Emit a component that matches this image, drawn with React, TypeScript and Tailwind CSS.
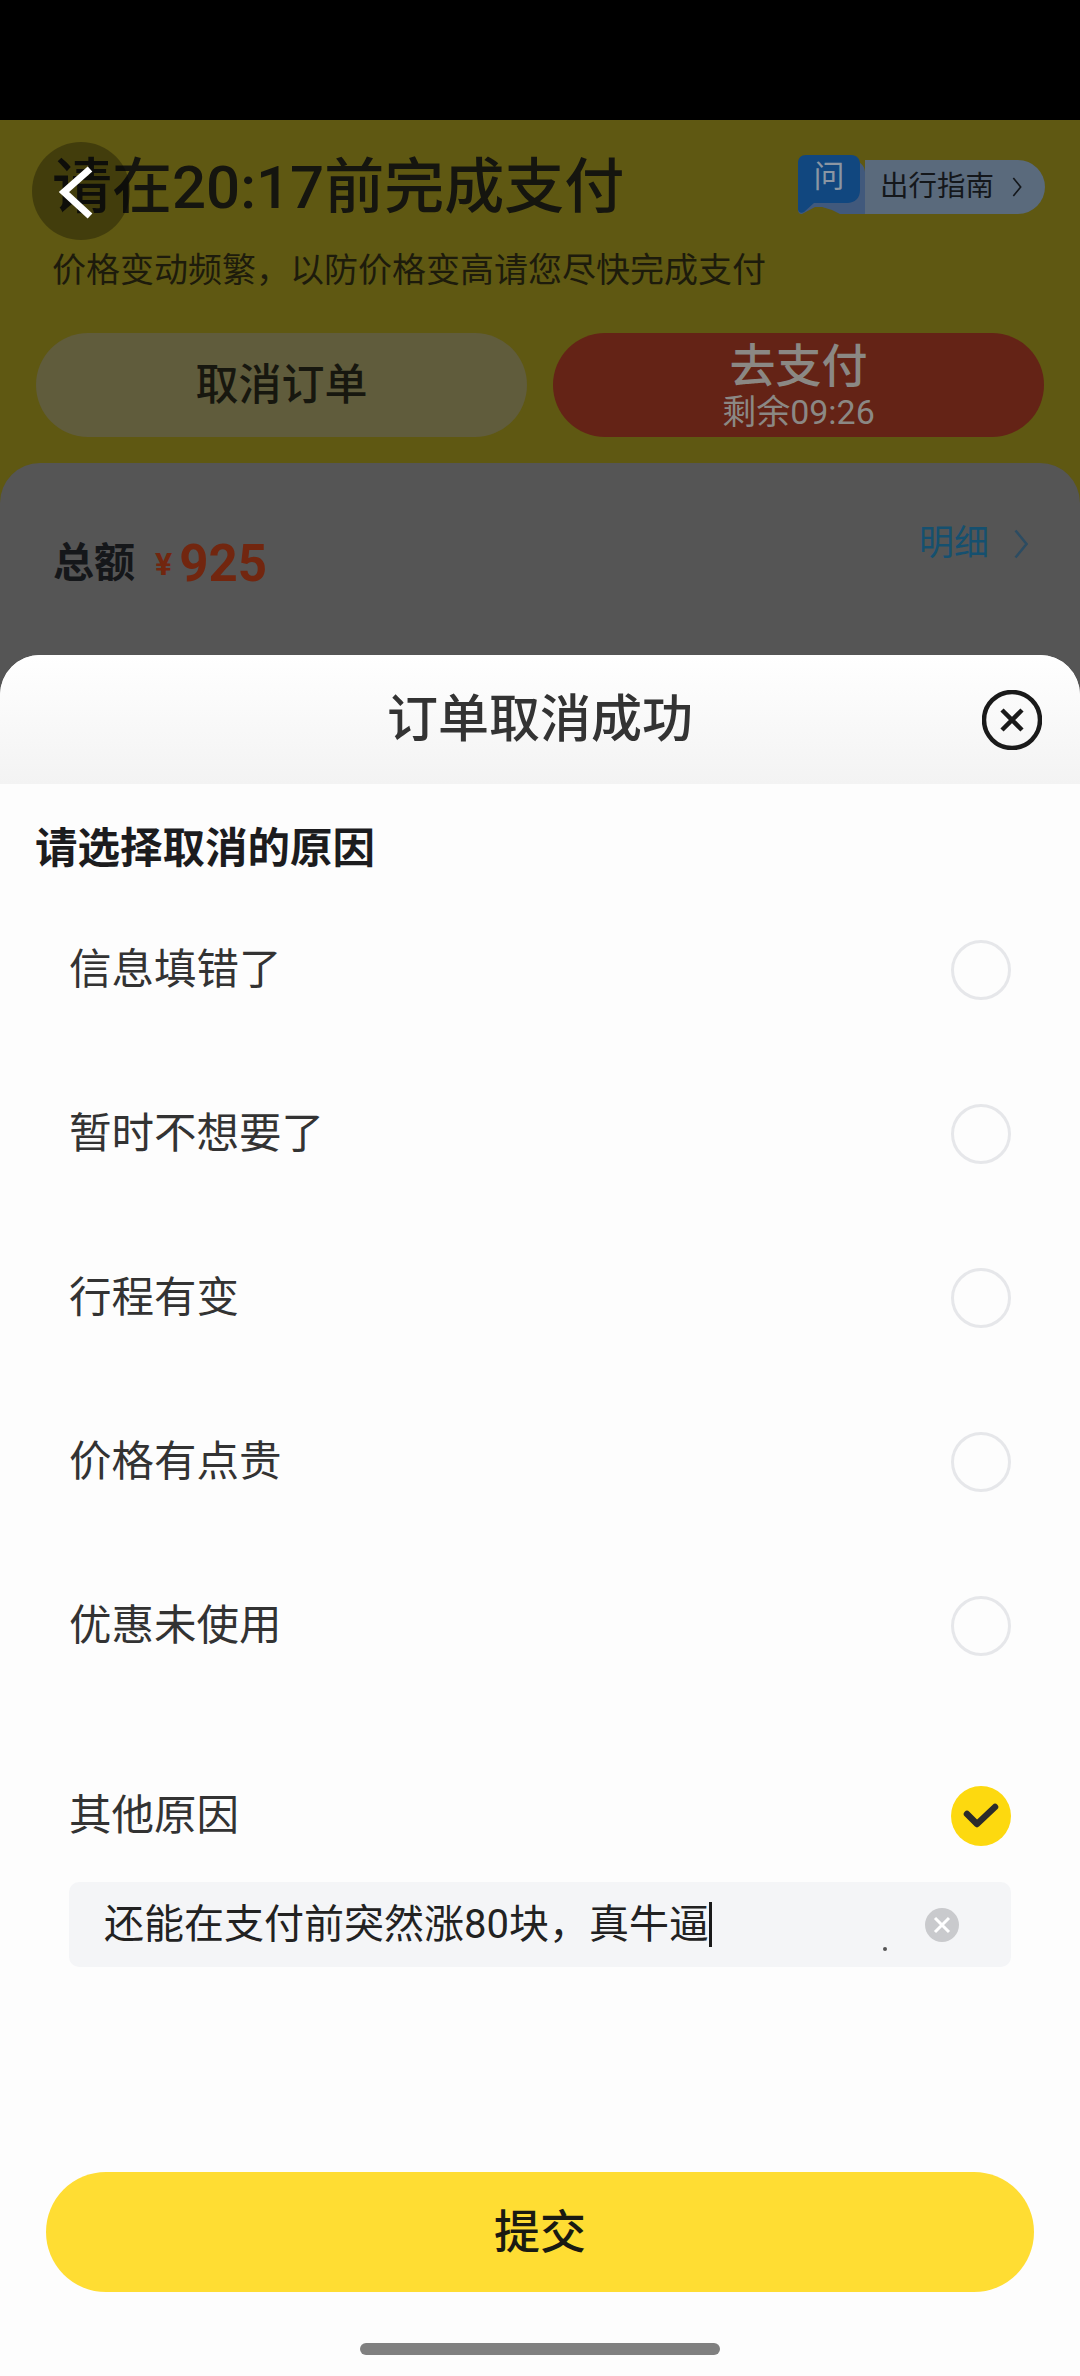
import React from 'react';

const FONT = "font-['Roboto','Noto_Sans_CJK_SC',sans-serif]";

const REASONS = ['信息填错了', '暂时不想要了', '行程有变', '价格有点贵', '优惠未使用'];

const Chevron: React.FC<{ className: string }> = ({ className }) => (
  <svg viewBox="0 0 14 30" fill="none" className={className}>
    <path d="M1.5 1.5L12.5 15 1.5 28.5" stroke="currentColor" strokeWidth="2.5" />
  </svg>
);

const GuideLink = () => (
  <div className="mt-[2px] flex items-end">
    <div className="relative z-10 h-[59px] w-[67px]">
      <svg viewBox="0 0 67 59" className="absolute inset-0 h-full w-full">
        <path d="M10 5h44c7 0 13 6 13 12v42H42l-8-4-10-3H17L4 59c-3 0-4-2-4-5V14C0 9 5 5 10 5z" fill="#41597c" />
        <path d="M8 0h45c6 0 9 4 9 9v26c0 8-5 13-13 13H16L6 57c-3 2-6 0-6-3V8c0-5 3-8 8-8z" fill="#11477f" />
      </svg>
      <span className="absolute left-0 top-[2px] w-[62px] text-center text-[31px] leading-[40px] text-[#8b96a3]">问</span>
    </div>
    <div className="flex h-[54px] items-center gap-[18px] rounded-r-full bg-[#5a6a7c] pl-[15px] pr-[23px]">
      <span className="text-[28.5px] leading-[40px] text-[#14171b]">出行指南</span>
      <Chevron className="h-[20px] w-[10px] text-[#14171b]" />
    </div>
  </div>
);

export default function App() {
  return (
    <div className={`relative flex h-[2376px] w-[1080px] flex-col overflow-hidden bg-black ${FONT}`}>
      <div className="h-[120px] shrink-0 bg-black" />

      {/* dimmed order page behind the sheet */}
      <div className="flex flex-1 flex-col bg-[#5f5812]">
        <div className="flex items-start justify-between pl-[52px] pr-[35px] pt-[33px]">
          <h1 className="text-[60px] font-medium leading-[70px] text-[#15150f]">请在20:17前完成支付</h1>
          <GuideLink />
        </div>
        <p className="mt-[25px] pl-[52px] text-[34px] leading-[44px] text-[#1d1b0c]">价格变动频繁，以防价格变高请您尽快完成支付</p>

        <div className="mt-[41px] flex gap-[26px] px-[36px]">
          <div className="flex h-[104px] flex-1 items-center justify-center rounded-full bg-[#605c3c] text-[43px] font-medium text-[#17170f]">
            取消订单
          </div>
          <div className="flex h-[104px] flex-1 flex-col items-center justify-center rounded-full bg-[#642316] text-[#8b8884]">
            <span className="text-[46px] font-medium leading-[54px]">去支付</span>
            <span className="text-[34px] leading-[38px]">剩余09:26</span>
          </div>
        </div>

        <div className="mt-[26px] flex flex-1 items-start justify-between rounded-t-[40px] bg-[#555555] pl-[53px] pr-[52px] pt-[56px]">
          <div className="mt-[17px] flex h-[56px] items-center">
            <span className="text-[41px] font-bold text-[#15171a]">总额</span>
            <span className="ml-[20px] text-[32px] font-bold text-[#72260f]">¥</span>
            <span className="ml-[7px] text-[51px] font-bold text-[#72260f]">925</span>
          </div>
          <div className="flex h-[50px] items-center gap-[25px] text-[#15506f]">
            <span className="text-[35px]">明细</span>
            <Chevron className="h-[30px] w-[14px] text-[#2c4c62]" />
          </div>
        </div>
      </div>

      <button className="absolute left-[32px] top-[142px] flex h-[98px] w-[98px] items-center justify-center rounded-full bg-[#0000004d]">
        <svg viewBox="0 0 98 98" className="h-[98px] w-[98px]" fill="none">
          <path d="M58 27L32 50l26 24" stroke="#fff" strokeWidth="7" />
        </svg>
      </button>

      {/* cancel reason sheet */}
      <div className="absolute inset-x-0 bottom-0 top-[655px] flex flex-col rounded-t-[40px] bg-[#fdfdfd]">
        <div className="grid h-[129px] shrink-0 grid-cols-[1fr_auto_1fr] items-center rounded-t-[40px] bg-gradient-to-b from-white to-[#f3f3f3]">
          <span />
          <h2 className="text-[51px] font-medium leading-[60px] text-[#333333]">订单取消成功</h2>
          <svg viewBox="0 0 60 60" className="mr-[38px] h-[60px] w-[60px] justify-self-end" fill="none">
            <circle cx="30" cy="30" r="28" stroke="#1a1a1a" strokeWidth="4.5" />
            <path d="M20 20l20 20M40 20L20 40" stroke="#1a1a1a" strokeWidth="4.5" />
          </svg>
        </div>

        <h3 className="mt-[37px] pl-[35px] text-[42.5px] font-bold leading-[56px] text-[#1c1c1e]">请选择取消的原因</h3>

        <div className="mt-[11px]">
          {REASONS.map((reason) => (
            <div key={reason} className="ml-[69px] mr-[69px] flex h-[164px] items-center justify-between">
              <span className="text-[42.5px] text-[#333333]">{reason}</span>
              <span className="h-[60px] w-[60px] rounded-full border-[3px] border-[#e6e7ea]" />
            </div>
          ))}
        </div>

        <div className="ml-[69px] mr-[69px] mt-[78px] flex h-[60px] items-center justify-between">
          <span className="text-[42.5px] text-[#333333]">其他原因</span>
          <svg viewBox="0 0 60 60" className="h-[60px] w-[60px]">
            <circle cx="30" cy="30" r="30" fill="#fdd90f" />
            <path d="M16 28l10 10 18-17" stroke="#2b2b2b" strokeWidth="6.5" strokeLinecap="round" strokeLinejoin="round" fill="none" />
          </svg>
        </div>

        <div className="relative mx-[69px] mt-[36px] flex h-[85px] items-center justify-between rounded-[10px] bg-[#f4f5f7] pl-[35px] pr-[52px]">
          <span className="flex items-center text-[40px] text-[#222222]">
            还能在支付前突然涨80块，真牛逼
            <span className="h-[45px] w-[3px] bg-[#1a1a1a]" />
          </span>
          <svg viewBox="0 0 34 34" className="h-[34px] w-[34px]">
            <circle cx="17" cy="17" r="17" fill="#c9cacd" />
            <path d="M10 10l14 14M24 10L10 24" stroke="#fff" strokeWidth="3" />
          </svg>
          <span className="absolute left-[814px] top-[65px] h-[4px] w-[4px] rounded-full bg-[#555555]" />
        </div>

        <button className="mx-[46px] mt-[205px] h-[120px] shrink-0 rounded-full bg-[#ffdd33] text-[46px] font-medium text-[#1a1a12]">
          提交
        </button>

        <div className="mx-auto mt-[51px] h-[12px] w-[360px] rounded-full bg-[#808080]" />
      </div>
    </div>
  );
}
